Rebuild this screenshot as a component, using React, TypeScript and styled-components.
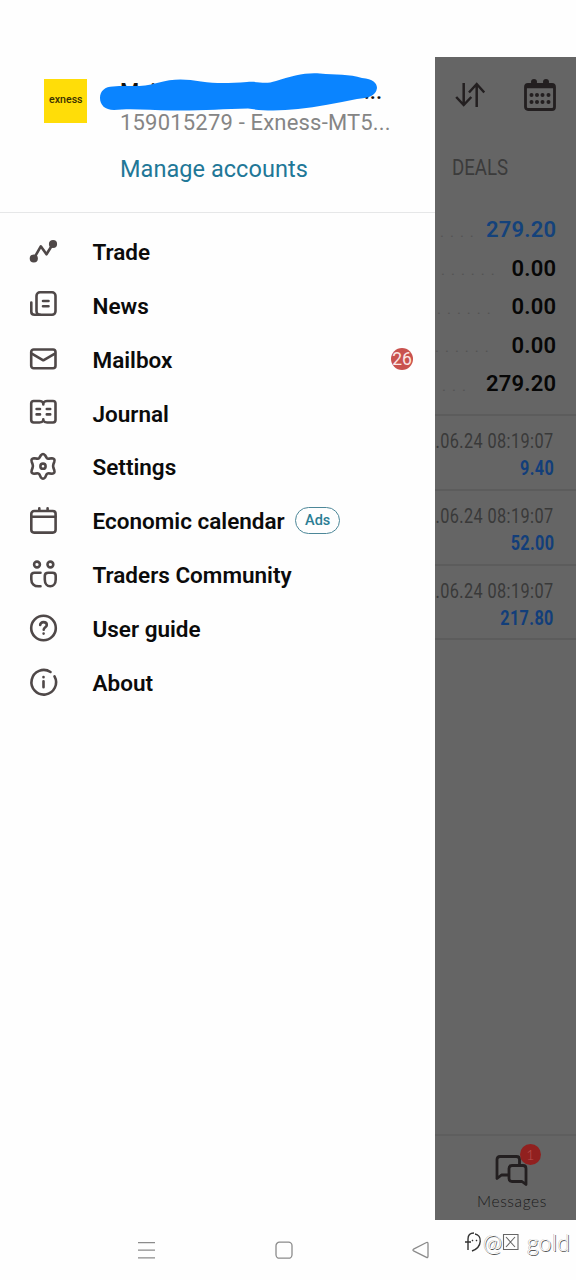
import React from "react";
import styled, { createGlobalStyle } from "styled-components";

const GlobalStyle = createGlobalStyle`
  * { box-sizing: border-box; }
  body { margin: 0; background: #fefefe; font-family: Roboto, "Liberation Sans", sans-serif; }
`;

const Screen = styled.div`
  width: 576px;
  height: 1280px;
  padding-top: 57px;
  background: #fefefe;
  display: flex;
  flex-direction: column;
  overflow: hidden;
`;

const Main = styled.main`
  display: flex;
  height: 1163px;
`;

const Drawer = styled.aside`
  width: 435px;
  display: flex;
  flex-direction: column;
`;

const Account = styled.header`
  height: 156px;
  padding: 22px 0 0 44px;
  display: flex;
  gap: 33px;
  border-bottom: 1.5px solid #e6e7e8;
`;

const Logo = styled.div`
  width: 43px;
  height: 44px;
  flex: none;
  background: #ffdd08;
  color: #3a3000;
  font: 500 10px/42px Roboto, sans-serif;
  text-align: center;

  span {
    display: inline-block;
    transform: scaleX(1.06);
  }
`;

const AccountText = styled.div`
  display: flex;
  flex-direction: column;
  position: relative;
  padding-top: 1px;
`;

const OwnerName = styled.div`
  height: 27px;
  display: flex;
  justify-content: space-between;
  width: 262px;
  color: #111;
  font: 500 22px/24px Roboto, sans-serif;
`;

const Scribble = styled.svg`
  position: absolute;
  left: -21px;
  top: -6px;
`;

const AccountNumber = styled.div`
  color: #858585;
  font-size: 22px;
  line-height: 32px;
  letter-spacing: 0.19px;
  white-space: nowrap;
`;

const Manage = styled.a`
  margin-top: 15px;
  color: #217797;
  font-size: 23.5px;
  line-height: 31px;
  letter-spacing: 0.05px;
`;

const Menu = styled.nav`
  padding-top: 12px;
`;

const MenuRow = styled.div`
  height: 53.87px;
  padding-left: 29px;
  display: flex;
  align-items: center;
`;

const Icon = styled.svg`
  width: 28px;
  height: 28px;
  margin: 0 35.5px 2px 0;
  flex: none;
  overflow: visible;
  fill: none;
  stroke: #4f4848;
  stroke-width: 2.6;
  stroke-linecap: round;
  stroke-linejoin: round;
`;

const Label = styled.span`
  color: #0b0b0b;
  font-size: 22.5px;
  font-weight: 600;
  line-height: 28px;
  white-space: nowrap;
`;

const AdsPill = styled.span`
  width: 45px;
  height: 27px;
  margin: 0 0 2px 10.5px;
  border: 1.5px solid #4c8798;
  border-radius: 14px;
  color: #2b7d94;
  font: 500 14.5px/25px Roboto, sans-serif;
  text-align: center;
`;

const Count = styled.span`
  width: 22px;
  height: 22px;
  margin: 0 22px 2px auto;
  border-radius: 50%;
  background: #c9524e;
  color: #fbe6e4;
  font-size: 17.5px;
  line-height: 23px;
  display: flex;
  justify-content: center;
`;

const History = styled.section`
  width: 141px;
  background: #656565;
  display: flex;
  flex-direction: column;
  overflow: hidden;
`;

const Toolbar = styled.div`
  height: 76px;
  padding: 0 20px 0 20px;
  display: flex;
  align-items: center;
  justify-content: space-between;
`;

const TabLabel = styled.div`
  height: 69px;
  padding: 19px 0 0 17px;
  color: #3b3b3b;
  font-size: 22.5px;
  line-height: 30px;
  transform: scaleX(0.83);
  transform-origin: 17px 0;
`;

const Totals = styled.div`
  height: 214px;
  padding: 8px 20px 0 0;
  border-bottom: 2px solid #5c5c5c;
`;

const Total = styled.div`
  height: 38.5px;
  display: flex;
  align-items: center;
  justify-content: space-between;
  white-space: nowrap;
`;

const Leader = styled.span<{ $left: number }>`
  color: #535353;
  font-size: 15px;
  padding: 5px 0 0 ${(p) => p.$left}px;
  letter-spacing: 6px;
`;

const Amount = styled.span<{ $blue?: boolean }>`
  color: ${(p) => (p.$blue ? "#14427b" : "#070707")};
  font-size: 22px;
  font-weight: 600;
  letter-spacing: 0.2px;
  margin-right: -0.2px;
  padding-top: 1px;
`;

const Deal = styled.div`
  height: 74.8px;
  padding: 11px 22px 0 0;
  display: flex;
  flex-direction: column;
  align-items: flex-end;
  border-bottom: 2px solid #5c5c5c;
`;

const DealTime = styled.span`
  color: #393939;
  font-size: 20.5px;
  line-height: 28px;
  letter-spacing: 0.5px;
  white-space: nowrap;
  transform: scaleX(0.795);
  transform-origin: right;
`;

const Profit = styled.span`
  color: #123e7a;
  font-size: 20.5px;
  font-weight: 700;
  line-height: 26px;
  letter-spacing: 0.5px;
  transform: scaleX(0.79);
  transform-origin: right;
`;

const Messages = styled.div`
  height: 86px;
  margin-top: auto;
  padding: 18px 0 0 13px;
  border-top: 2px solid #5e5e5e;
  display: flex;
  flex-direction: column;
  align-items: center;
  color: #1a1a1a;
  font: 300 15.5px/20px Lato, sans-serif;
  letter-spacing: 0.6px;
`;

const MessageIcon = styled.div`
  position: relative;
  height: 37px;
`;

const MessageCount = styled.span`
  position: absolute;
  left: 25px;
  top: -10px;
  width: 21px;
  height: 21px;
  border-radius: 50%;
  background: #91201f;
  color: #b9524f;
  font: 300 14px/21px Lato, sans-serif;
  text-align: center;
`;

const SystemBar = styled.footer`
  height: 60px;
  padding-left: 137px;
  display: flex;
  align-items: center;
`;

const SystemIcon = styled.svg<{ $gap: number }>`
  width: 18px;
  height: 18px;
  margin-right: ${(p) => p.$gap}px;
  flex: none;
  fill: none;
  stroke: #8b8b8b;
  stroke-width: 1.3;
  stroke-linejoin: round;
`;

const Watermark = styled.div`
  display: flex;
  align-items: center;
  margin-top: -17px;
  color: #fff;
  font: 300 23px/28px Lato, sans-serif;
  letter-spacing: 0.3px;
  text-shadow: 0.8px 0.8px 0.5px #555, -0.4px -0.4px 0.5px #aaa;
  white-space: nowrap;
`;

const items: { label: string; icon: React.ReactNode; ads?: boolean; count?: number }[] = [
  {
    label: "Trade",
    icon: (
      <>
        <path d="M5 21.3L11.8 9.3L17.5 17.3L24 6.8" />
        <circle cx="4.8" cy="21.5" r="2.8" fill="#4f4848" />
        <circle cx="24" cy="7" r="2.8" fill="#4f4848" />
      </>
    ),
  },
  {
    label: "News",
    icon: (
      <>
        <rect x="7.5" y="1.3" width="19" height="22.5" rx="3.5" />
        <path d="M2.3 11.6V20.8C2.3 22.8 3.5 23.8 5.5 23.8H11M14 10H19.5M14 15.3H19.5" />
      </>
    ),
  },
  {
    label: "Mailbox",
    count: 26,
    icon: (
      <>
        <rect x="2.2" y="4.5" width="24.3" height="18.8" rx="2.5" />
        <path d="M3.2 8.8L14.3 15.3L25.5 8.8" />
      </>
    ),
  },
  {
    label: "Journal",
    icon: (
      <>
        <path d="M14.3 4.2C13.5 2.5 12 2 10.5 2H4.7C3 2 2.2 2.9 2.2 4.5V21.1C2.2 22.7 3 23.5 4.7 23.5H10.5C12 23.5 13.5 23 14.3 21.5C15.1 23 16.6 23.5 18.1 23.5H24C25.7 23.5 26.5 22.7 26.5 21.1V4.5C26.5 2.9 25.7 2 24 2H18.1C16.6 2 15.1 2.5 14.3 4.2ZM14.3 4.2V5.5M14.3 20.2V21.5" />
        <path d="M7.6 10H11M7.6 15.4H11M17.8 10H21.2M17.8 15.4H21.2" />
      </>
    ),
  },
  {
    label: "Settings",
    icon: (
      <>
        <path d="M11.9 3.3Q14 .8 16.1 3.3L17.6 5.7Q18.5 7 20.2 6.6L22.9 6.2Q26.3 6.7 25.3 9.7L24.4 12.2Q23.8 14 24.4 15.8L25.3 18.3Q26.3 21.3 22.9 21.8L20.2 21.4Q18.5 21 17.6 22.3L16.1 25.5Q14 28 11.9 25.5L10.4 22.3Q9.5 21 7.8 21.4L5.1 21.8Q1.7 21.3 2.7 18.3L3.6 15.8Q4.2 14 3.6 12.2L2.7 9.7Q1.7 6.7 5.1 6.2L7.8 6.6Q9.5 7 10.4 5.7Z" />
        <circle cx="14" cy="14.2" r="2.6" />
      </>
    ),
  },
  {
    label: "Economic calendar",
    ads: true,
    icon: (
      <>
        <rect x="2.3" y="5" width="24.3" height="21.6" rx="2.8" />
        <path d="M2.5 10.8H26.4M10.3 2.3V4.5M18.6 2.3V4.5" />
      </>
    ),
  },
  {
    label: "Traders Community",
    icon: (
      <>
        <circle cx="8" cy="4.5" r="2.9" />
        <circle cx="21.4" cy="4.5" r="2.9" />
        <path d="M11.5 12.7H5.4C3.4 12.7 2.3 13.7 2.3 15.7V19.2C2.3 23.8 5.3 26.3 9.5 26.3H11.5" />
        <path d="M19.3 12.7H23.5C25.6 12.7 26.7 13.7 26.7 15.7V19.4C26.7 23.7 24.3 26.3 21.2 26.3S15.8 23.7 15.8 19.4V15.7C15.8 13.7 17 12.7 19.3 12.7Z" />
      </>
    ),
  },
  {
    label: "User guide",
    icon: (
      <>
        <circle cx="14.5" cy="14" r="12.3" />
        <path d="M11.2 11C11.2 9.2 12.5 8.1 14.5 8.1S17.8 9.2 17.8 10.9C17.8 13.2 14.7 13.2 14.7 15.7M14.6 19.5V19.6" />
      </>
    ),
  },
  {
    label: "About",
    icon: (
      <>
        <path d="M21.5 4A12.3 12.3 0 1 0 25.5 8.3M14.5 13.2V19.2M14.5 9.1V9.2" />
      </>
    ),
  },
];

const totals = [
  { value: "279.20", dots: "....", left: 5, blue: true },
  { value: "0.00", dots: "......", left: 6 },
  { value: "0.00", dots: "......", left: 2 },
  { value: "0.00", dots: "......", left: 0 },
  { value: "279.20", dots: "...", left: 7 },
];

const deals = ["9.40", "52.00", "217.80"];

export default function App() {
  return (
    <Screen>
      <GlobalStyle />
      <Main>
        <Drawer>
          <Account>
            <Logo>
              <span>exness</span>
            </Logo>
            <AccountText>
              <OwnerName>
                <span>M&nbsp;&nbsp;i</span>
                <span>...</span>
              </OwnerName>
              <Scribble width="282" height="42" viewBox="0 0 282 42">
                <path
                  fill="#0a84ff"
                  d="M1 25C1 18 6 13.5 14 13.5C30 12 43 15 58 10C75 5 87 6 102 8.5C119 11 131 10 148 9C160 8 165 12 177 8C192 3 208 -1 221 .5C236 2 251 1 263 5C274 6 278 10 278 15C277 23 269 25 258 26C238 30 218 34 199 36C181 38 163 38 149 35.5C124 36 100 38 72 37.5C51 37 31 35 15 37C6 37 1 32 1 25Z"
                />
              </Scribble>
              <AccountNumber>159015279 - Exness-MT5...</AccountNumber>
              <Manage>Manage accounts</Manage>
            </AccountText>
          </Account>
          <Menu>
            {items.map((item) => (
              <MenuRow key={item.label}>
                <Icon viewBox="0 0 28 28">{item.icon}</Icon>
                <Label>{item.label}</Label>
                {item.ads && <AdsPill>Ads</AdsPill>}
                {item.count && <Count>{item.count}</Count>}
              </MenuRow>
            ))}
          </Menu>
        </Drawer>
        <History>
          <Toolbar>
            <svg width="30" height="28" viewBox="0 0 30 28" fill="none" stroke="#231f20" strokeWidth="2.5">
              <path d="M8.7 2V24M1.2 16L8.7 24L16.3 16M21.7 26V3M14 11.5L21.7 3L29.3 11.5" />
            </svg>
            <svg width="32" height="34" viewBox="0 0 32 34" fill="none" stroke="#231f20" strokeWidth="2.8">
              <rect x="1.5" y="6.5" width="29" height="25" rx="2.5" />
              <path d="M2 8.5H30" strokeWidth="3.5" />
              <g fill="#231f20" stroke="none">
                <circle cx="10" cy="4" r="3" />
                <circle cx="22" cy="4" r="3" />
                {[7.5, 13, 18.5, 24.5].map((x) => (
                  <React.Fragment key={x}>
                    <circle cx={x} cy="17" r="2" />
                    <circle cx={x} cy="24" r="2" />
                  </React.Fragment>
                ))}
              </g>
            </svg>
          </Toolbar>
          <TabLabel>DEALS</TabLabel>
          <Totals>
            {totals.map((t, i) => (
              <Total key={i}>
                <Leader $left={t.left}>{t.dots}</Leader>
                <Amount $blue={t.blue}>{t.value}</Amount>
              </Total>
            ))}
          </Totals>
          {deals.map((profit) => (
            <Deal key={profit}>
              <DealTime>.06.24 08:19:07</DealTime>
              <Profit>{profit}</Profit>
            </Deal>
          ))}
          <Messages>
            <MessageIcon>
              <svg width="34" height="32" viewBox="0 0 34 32" fill="none" stroke="#231f20" strokeWidth="2.8" strokeLinejoin="round">
                <path d="M13.5 21H6.5L2 24.5V5.5C2 3.5 3 2.5 5 2.5H21.5C23.5 2.5 24.5 3.5 24.5 5.5V10" />
                <path d="M17 11.5H28C30 11.5 31 12.5 31 14.5V30.5L27 27.5H17C15 27.5 14 26.5 14 24.5V14.5C14 12.5 15 11.5 17 11.5Z" />
              </svg>
              <MessageCount>1</MessageCount>
            </MessageIcon>
            Messages
          </Messages>
        </History>
      </Main>
      <SystemBar>
        <SystemIcon $gap={120} viewBox="0 0 18 18">
          <path d="M1 1.6H18M1 9.2H18M1 16.8H18" />
        </SystemIcon>
        <SystemIcon $gap={119} viewBox="0 0 18 18">
          <rect x="1" y="1.2" width="16" height="16" rx="3.5" />
        </SystemIcon>
        <SystemIcon $gap={34} viewBox="0 0 18 18">
          <path d="M1.5 8.2L14.5 1.5Q16 1 16 2.7V15.3Q16 17 14.5 16.3L1.5 9.8Q.3 9 1.5 8.2Z" />
        </SystemIcon>
        <Watermark>
          <svg width="19" height="24" viewBox="0 0 19 24" fill="none" stroke="#333" strokeWidth="1.4">
            <path d="M1 12H7M4 20V9C4 5 6 3 10 3M11 4C18 5 19 17 8 21M8 11L9 10M12 11L13 10" />
          </svg>
          @
          <svg width="18" height="18" viewBox="0 0 18 18" fill="none" stroke="#666" strokeWidth="1.1">
            <path d="M1.5 1.5H16V16.5H1.5ZM4 4L13 14M13 4L4 14" />
          </svg>
          &nbsp;gold
        </Watermark>
      </SystemBar>
    </Screen>
  );
}
